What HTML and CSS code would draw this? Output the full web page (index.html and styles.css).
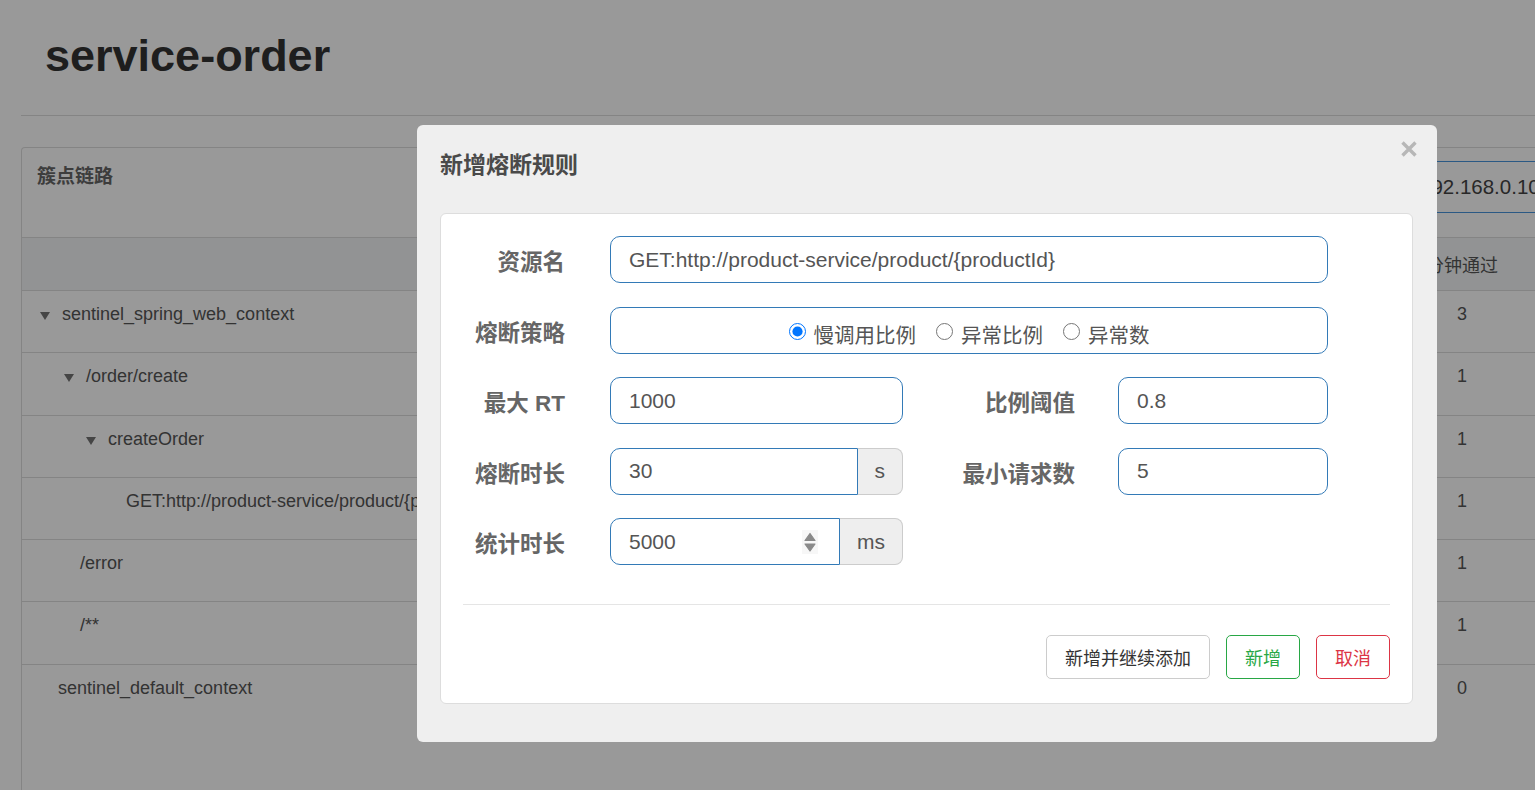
FILE: index.html
```html
<!DOCTYPE html>
<html lang="zh-CN">
<head>
    <meta charset="UTF-8">
    <meta name="viewport" content="width=device-width, initial-scale=1.0">
    <title>service-order - 簇点链路</title>
    <link rel="stylesheet" href="styles.css">
</head>
<body>
    <div class="page">
        <h1>service-order</h1>
        <hr>

        <section class="card">
            <div class="card-head">
                <h4>簇点链路</h4>
                <input type="text" class="machine" value="192.168.0.104:8720">
            </div>
            <table class="tree">
                <colgroup>
                    <col class="c-name">
                    <col class="c-num"><col class="c-num"><col class="c-num"><col class="c-num">
                    <col class="c-min">
                    <col>
                </colgroup>
                <thead>
                    <tr>
                        <th>资源名</th>
                        <th>通过QPS</th>
                        <th>拒绝QPS</th>
                        <th>并发数</th>
                        <th>平均RT</th>
                        <th>分钟通过</th>
                        <th>分钟拒绝</th>
                    </tr>
                </thead>
                <tbody>
                    <tr>
                        <td class="node-root"><span class="toggle"></span>sentinel_spring_web_context</td>
                        <td>0</td><td>0</td><td>0</td><td>0</td><td>3</td><td>0</td>
                    </tr>
                    <tr>
                        <td class="node-l1"><span class="toggle"></span>/order/create</td>
                        <td>0</td><td>0</td><td>0</td><td>0</td><td>1</td><td>0</td>
                    </tr>
                    <tr>
                        <td class="node-l2"><span class="toggle"></span>createOrder</td>
                        <td>0</td><td>0</td><td>0</td><td>0</td><td>1</td><td>0</td>
                    </tr>
                    <tr>
                        <td class="leaf-l3">GET:http://product-service/product/{productId}</td>
                        <td>0</td><td>0</td><td>0</td><td>0</td><td>1</td><td>0</td>
                    </tr>
                    <tr>
                        <td class="leaf-l1">/error</td>
                        <td>0</td><td>0</td><td>0</td><td>0</td><td>1</td><td>0</td>
                    </tr>
                    <tr>
                        <td class="leaf-l1">/**</td>
                        <td>0</td><td>0</td><td>0</td><td>0</td><td>1</td><td>0</td>
                    </tr>
                    <tr class="last">
                        <td class="leaf-root">sentinel_default_context</td>
                        <td>0</td><td>0</td><td>0</td><td>0</td><td>0</td><td>0</td>
                    </tr>
                </tbody>
            </table>
        </section>
    </div>

    <div class="overlay"></div>

    <div class="modal">
        <button class="close" type="button">
            <svg width="16" height="16" viewBox="0 0 16 16">
                <path d="M1.5 1.5 L14.5 14.5 M14.5 1.5 L1.5 14.5" stroke="#b7b7b7" stroke-width="3.4" fill="none"/>
            </svg>
        </button>
        <h3 class="modal-title">新增熔断规则</h3>

        <div class="panel">
            <form class="rule-form">
                <label class="ctl-label">资源名</label>
                <input type="text" class="ctl wide" value="GET:http://product-service/product/{productId}">

                <label class="ctl-label">熔断策略</label>
                <div class="ctl wide radios">
                    <label class="radio"><input type="radio" name="grade" checked>慢调用比例</label>
                    <label class="radio"><input type="radio" name="grade">异常比例</label>
                    <label class="radio"><input type="radio" name="grade">异常数</label>
                </div>

                <label class="ctl-label">最大 RT</label>
                <input type="text" class="ctl" value="1000">
                <label class="ctl-label second">比例阈值</label>
                <input type="text" class="ctl" value="0.8">

                <label class="ctl-label">熔断时长</label>
                <div class="input-group">
                    <input type="text" class="ctl" value="30">
                    <span class="addon">s</span>
                </div>
                <label class="ctl-label second">最小请求数</label>
                <input type="text" class="ctl" value="5">

                <label class="ctl-label">统计时长</label>
                <div class="input-group">
                    <div class="ctl spin">
                        <input type="text" value="5000">
                        <svg width="16" height="24" viewBox="0 0 16 24">
                            <rect x="0" y="0" width="16" height="24" fill="#f7f7f7"/>
                            <path d="M3 10.5 L8 3.5 L13 10.5 Z" fill="#8a8a8a" stroke="#8a8a8a" stroke-width="1.2" stroke-linejoin="round"/>
                            <path d="M3 14 L13 14 L8 21 Z" fill="#8a8a8a" stroke="#8a8a8a" stroke-width="1.2" stroke-linejoin="round"/>
                        </svg>
                    </div>
                    <span class="addon">ms</span>
                </div>
            </form>

            <div class="form-foot">
                <button type="button" class="btn">新增并继续添加</button>
                <button type="button" class="btn btn-ok">新增</button>
                <button type="button" class="btn btn-cancel">取消</button>
            </div>
        </div>
    </div>
</body>
</html>
```

FILE: styles.css
```css
* {
    box-sizing: border-box;
}

html, body {
    margin: 0;
    padding: 0;
}

body {
    font-family: "Liberation Sans", "Noto Sans CJK SC", sans-serif;
    background-color: #fff;
    color: #555;
    width: 1535px;
    height: 790px;
    overflow: hidden;
}

/* page behind the dialog */
.page {
    padding-left: 21px;
    width: 1760px;
}

.page h1 {
    margin: 0;
    padding: 30px 0 0 24px;
    font-size: 45px;
    line-height: 52px;
    font-weight: bold;
    color: #333;
}

.page hr {
    margin: 33px 0 31px;
    border: 0;
    border-top: 1px solid #ddd;
}

.card {
    width: 1720px;
    min-height: 660px;
    border: 1px solid #ddd;
    border-bottom: 0;
    border-radius: 4px 4px 0 0;
}

.card-head {
    display: flex;
    justify-content: space-between;
    align-items: flex-start;
    height: 89px;
    padding: 13px 16px 0 15px;
}

.card-head h4 {
    margin: 3px 0 0;
    font-size: 19px;
    line-height: 26px;
    font-weight: bold;
    color: #666;
}

.machine {
    width: 317px;
    height: 52px;
    padding: 0 12px;
    border: 1px solid #4894dc;
    border-radius: 4px;
    font-family: "Liberation Sans", sans-serif;
    font-size: 20.5px;
    color: #444;
    background: #fff;
}

.tree {
    width: 100%;
    border-collapse: collapse;
    table-layout: fixed;
    font-size: 18px;
    color: #555;
}

.tree .c-name {
    width: 958px;
}

.tree .c-num {
    width: 108px;
}

.tree .c-min {
    width: 100px;
}

.tree th {
    height: 53px;
    background-color: #f3f5f7;
    border-top: 1px solid #ddd;
    font-weight: normal;
    text-align: center;
}

.tree td {
    height: 62.3px;
    padding: 11px 0 0;
    border-top: 1px solid #ddd;
    vertical-align: top;
    line-height: 25px;
    text-align: center;
    white-space: nowrap;
    overflow: hidden;
}

.tree td:first-child {
    text-align: left;
}

.node-root { padding-left: 18px !important; }
.node-l1 { padding-left: 42px !important; }
.node-l2 { padding-left: 64px !important; }
.leaf-l3 { padding-left: 104px !important; }
.leaf-l1 { padding-left: 58px !important; }
.leaf-root { padding-left: 36px !important; }

.toggle {
    display: inline-block;
    width: 0;
    height: 0;
    border-left: 5.5px solid transparent;
    border-right: 5.5px solid transparent;
    border-top: 8px solid #737373;
    margin-right: 12px;
    vertical-align: 0;
}

/* dialog */
.overlay {
    position: fixed;
    top: 0;
    left: 0;
    right: 0;
    bottom: 0;
    background: rgba(0, 0, 0, 0.4);
}

.modal {
    position: fixed;
    left: 417px;
    top: 125px;
    width: 1020px;
    padding: 27px 24px 38px 23px;
    background-color: #efefef;
    border-radius: 6px;
}

.close {
    position: absolute;
    top: 16px;
    right: 20px;
    padding: 0;
    border: 0;
    background: none;
    line-height: 0;
    cursor: pointer;
}

.modal-title {
    margin: 0;
    font-size: 23px;
    line-height: 26px;
    font-weight: bold;
    color: #4a4a4a;
}

.panel {
    margin-top: 35px;
    background-color: #fff;
    border: 1px solid #ddd;
    border-radius: 6px;
    padding: 22px 0 24px;
}

.rule-form {
    display: grid;
    grid-template-columns: 169px 293px 215px 210px;
    grid-auto-rows: 47px;
    row-gap: 23.5px;
}

.ctl-label {
    padding: 7px 45px 0 0;
    text-align: right;
    font-size: 22.5px;
    line-height: 40px;
    font-weight: bold;
    color: #666;
    white-space: nowrap;
}

.ctl-label.second {
    padding-right: 43px;
}

.ctl {
    width: 100%;
    height: 47px;
    padding: 0 18px;
    border: 1px solid #337ab7;
    border-radius: 10px;
    font-family: "Liberation Sans", sans-serif;
    font-size: 21px;
    color: #555;
    background: #fff;
    outline: none;
}

.wide {
    grid-column: 2 / 5;
}

.radios {
    display: flex;
    justify-content: center;
    align-items: center;
    gap: 20px;
    padding-top: 8px;
}

.radio {
    display: flex;
    align-items: center;
    gap: 8px;
    font-family: "Liberation Sans", "Noto Sans CJK SC", sans-serif;
    font-size: 20.5px;
    color: #555;
}

.radio input {
    width: 17px;
    height: 17px;
    margin: 0 0 5px;
}

.input-group {
    display: flex;
}

.input-group .ctl {
    flex: 1;
    min-width: 0;
    border-radius: 10px 0 0 10px;
}

.addon {
    display: flex;
    align-items: center;
    padding: 0 17px;
    background-color: #eee;
    border: 1px solid #ccc;
    border-left: 0;
    border-radius: 0 8px 8px 0;
    font-size: 21px;
    color: #555;
}

.spin {
    display: flex;
    align-items: center;
    padding-right: 21px;
}

.spin input {
    flex: 1;
    min-width: 0;
    padding: 0;
    border: 0;
    outline: none;
    font-family: "Liberation Sans", sans-serif;
    font-size: 21px;
    color: #555;
    background: transparent;
}

.form-foot {
    display: flex;
    justify-content: flex-end;
    gap: 16px;
    margin: 39px 22px 0;
    padding-top: 30px;
    border-top: 1px solid #e5e5e5;
}

.btn {
    height: 44px;
    padding: 0 18px;
    background: #fff;
    border: 1px solid #ccc;
    border-radius: 5px;
    font-family: "Liberation Sans", "Noto Sans CJK SC", sans-serif;
    font-size: 18px;
    color: #333;
    cursor: pointer;
}

.btn-ok {
    border-color: #28a745;
    color: #28a745;
}

.btn-cancel {
    border-color: #dc3545;
    color: #dc3545;
}
```
